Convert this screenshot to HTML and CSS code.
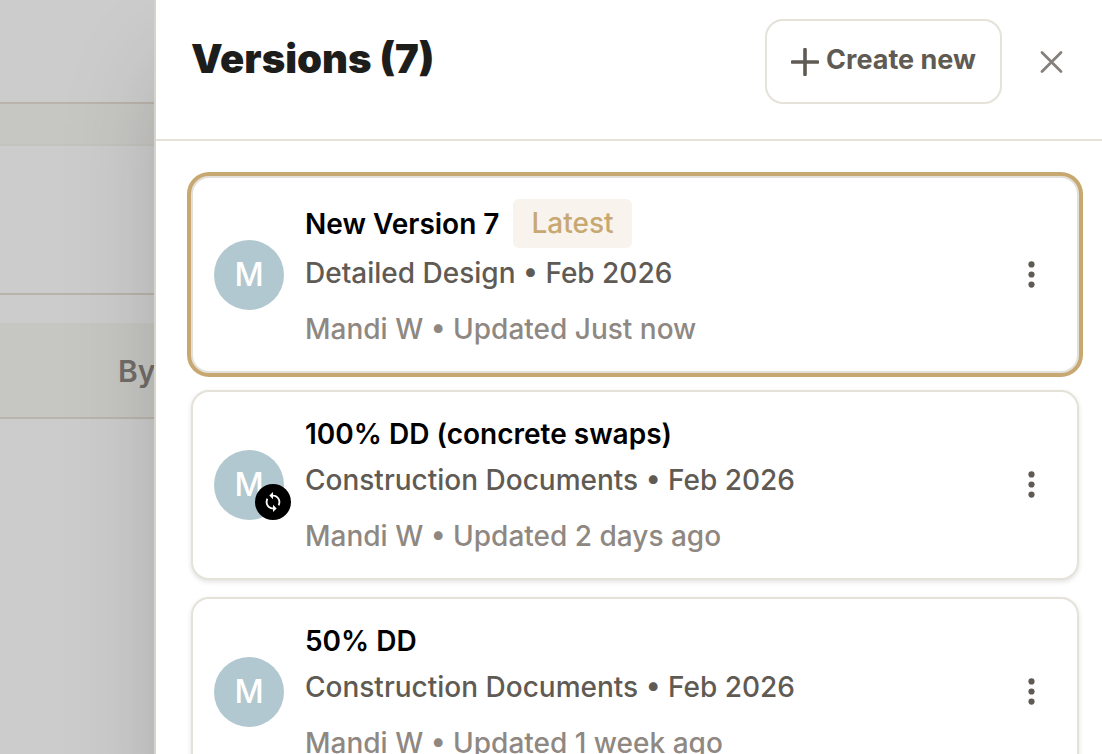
FILE: index.html
```html
<!DOCTYPE html>
<html lang="en">
<head>
    <meta charset="UTF-8">
    <meta name="viewport" content="width=device-width, initial-scale=1.0">
    <title>Versions</title>
    <link rel="stylesheet" href="styles.css">
</head>
<body>
    <div class="layout">
        <div class="page-behind">
            <div class="strip strip-top"></div>
            <div class="strip strip-tabs"></div>
            <div class="strip strip-toolbar"></div>
            <div class="strip strip-gap"></div>
            <div class="strip strip-head">By</div>
        </div>

        <main class="drawer">
            <header class="drawer-header">
                <h1>Versions (7)</h1>
                <button class="create-button" type="button">
                    <svg width="28" height="28" viewBox="0 0 28 28" aria-hidden="true">
                        <path d="M14 1.5V26.5M1.5 14H26.5" stroke="currentColor" stroke-width="3.6" stroke-linecap="round"/>
                    </svg>
                    <span>Create new</span>
                </button>
                <button class="close-button" type="button" aria-label="Close">
                    <svg width="32" height="32" viewBox="0 0 32 32" aria-hidden="true">
                        <path d="M7 6.5L26 25.5M26 6.5L7 25.5" stroke="currentColor" stroke-width="2.8" stroke-linecap="round"/>
                    </svg>
                </button>
            </header>

            <div class="version-list">
                <article class="card selected">
                    <div class="avatar">M</div>
                    <div class="details">
                        <div class="title-row">
                            <h2>New Version 7</h2>
                            <span class="badge">Latest</span>
                        </div>
                        <p class="phase">Detailed Design • Feb 2026</p>
                        <p class="updated">Mandi W • Updated Just now</p>
                    </div>
                    <button class="menu-button" type="button" aria-label="More options">
                        <svg width="8" height="28" viewBox="0 0 8 28" fill="currentColor" aria-hidden="true">
                            <circle cx="4.5" cy="3.4" r="3.1"/><circle cx="4.5" cy="13.5" r="3.1"/><circle cx="4.5" cy="23.6" r="3.1"/>
                        </svg>
                    </button>
                </article>

                <article class="card">
                    <div class="avatar">M
                        <span class="sync">
                            <svg width="22" height="22" viewBox="0 0 24 24" fill="currentColor" aria-hidden="true">
                                <path d="M12 4V1L8 5l4 4V6c3.31 0 6 2.69 6 6 0 1.01-.25 1.97-.7 2.8l1.46 1.46C19.54 15.03 20 13.57 20 12c0-4.42-3.58-8-8-8zm0 14c-3.31 0-6-2.69-6-6 0-1.01.25-1.97.7-2.8L5.24 7.74C4.46 8.97 4 10.43 4 12c0 4.42 3.58 8 8 8v3l4-4-4-4v3z"/>
                            </svg>
                        </span>
                    </div>
                    <div class="details">
                        <div class="title-row">
                            <h2>100% DD (concrete swaps)</h2>
                        </div>
                        <p class="phase">Construction Documents • Feb 2026</p>
                        <p class="updated">Mandi W • Updated 2 days ago</p>
                    </div>
                    <button class="menu-button" type="button" aria-label="More options">
                        <svg width="8" height="28" viewBox="0 0 8 28" fill="currentColor" aria-hidden="true">
                            <circle cx="4.5" cy="3.4" r="3.1"/><circle cx="4.5" cy="13.5" r="3.1"/><circle cx="4.5" cy="23.6" r="3.1"/>
                        </svg>
                    </button>
                </article>

                <article class="card">
                    <div class="avatar">M</div>
                    <div class="details">
                        <div class="title-row">
                            <h2>50% DD</h2>
                        </div>
                        <p class="phase">Construction Documents • Feb 2026</p>
                        <p class="updated">Mandi W • Updated 1 week ago</p>
                    </div>
                    <button class="menu-button" type="button" aria-label="More options">
                        <svg width="8" height="28" viewBox="0 0 8 28" fill="currentColor" aria-hidden="true">
                            <circle cx="4.5" cy="3.4" r="3.1"/><circle cx="4.5" cy="13.5" r="3.1"/><circle cx="4.5" cy="23.6" r="3.1"/>
                        </svg>
                    </button>
                </article>
            </div>
        </main>
    </div>
</body>
</html>
```

FILE: styles.css
```css
* {
    box-sizing: border-box;
}
body {
    margin: 0;
    height: 100vh;
    overflow: hidden;
    font-family: Inter, "Liberation Sans", sans-serif;
    font-size: 28px;
    line-height: 42px;
    background-color: #ccc;
}
h1, h2, p {
    margin: 0;
}
button {
    font: inherit;
    background: none;
    border: 0;
    padding: 0;
    display: flex;
    align-items: center;
    justify-content: center;
}
svg {
    display: block;
    fill: none;
}
svg[fill="currentColor"] {
    fill: currentColor;
}
.layout {
    display: grid;
    grid-template-columns: 154px 1fr;
}

/* dimmed page under the drawer */
.page-behind {
    overflow: hidden;
}
.strip {
    border-bottom: 2px solid #bab3ab;
}
.strip-top {
    height: 104px;
}
.strip-tabs {
    height: 42px;
    background-color: #c6c6c3;
    border-bottom-color: #c3c3be;
}
.strip-toolbar {
    height: 149px;
}
.strip-gap {
    height: 28px;
    border-bottom: 0;
}
.strip-head {
    height: 96px;
    padding: 27px 0 0 118px;
    background-color: #c6c6c3;
    border-bottom-color: #bab5ab;
    color: #716d69;
    font-size: 30px;
    font-weight: 600;
    white-space: nowrap;
}

.drawer {
    position: relative;
    background-color: #fff;
    border-left: 2px solid #d5d3ca;
    box-shadow: 0 50px 100px -24px rgba(0, 0, 0, 0.25);
}
.drawer-header {
    display: flex;
    align-items: center;
    padding: 19px 35px 35px;
    border-bottom: 2px solid #e5e2d9;
}
h1 {
    flex: 1;
    padding-bottom: 5px;
    font-size: 40px;
    font-weight: 900;
    color: #1d1d1b;
}
.create-button {
    height: 85px;
    padding: 0 24px;
    gap: 7px;
    border: 2px solid #e5e2d9;
    border-radius: 18px;
    color: #5f5b54;
    font-size: 27px;
    font-weight: 700;
}
.create-button span {
    padding-bottom: 3px;
}
.close-button {
    margin-left: 33px;
    color: #85807b;
}

.version-list {
    display: flex;
    flex-direction: column;
    gap: 17px;
    padding: 35px 23px 35px 35px;
}
.card {
    display: flex;
    align-items: center;
    gap: 21px;
    padding: 21px;
    background-color: #fff;
    border: 2px solid #e5e2d9;
    border-radius: 18px;
    box-shadow: 0 2px 5px rgba(0, 0, 0, 0.12);
}
.card.selected {
    border-color: #e2e0d9;
    box-shadow: 0 0 0 4px #c8a871;
}
.avatar {
    position: relative;
    width: 70px;
    height: 70px;
    border-radius: 50%;
    background-color: #b1c8d0;
    color: #fff;
    font-size: 32px;
    font-weight: 500;
    line-height: 70px;
    text-align: center;
}
.sync {
    position: absolute;
    right: -7px;
    bottom: 0;
    width: 36px;
    height: 36px;
    display: flex;
    align-items: center;
    justify-content: center;
    border-radius: 50%;
    background-color: #000;
}
.details {
    flex: 1;
    font-weight: 500;
}
.title-row {
    display: flex;
    align-items: center;
    gap: 14px;
    margin-bottom: 4px;
}
h2 {
    font-size: 28px;
    font-weight: 600;
    color: #000;
}
.badge {
    padding: 0 18px;
    line-height: 49px;
    border-radius: 6px;
    background-color: #f8f3ed;
    color: #c8a871;
}
.phase {
    color: #5f5b54;
}
.updated {
    margin-top: 14px;
    color: #8f8882;
}
.menu-button {
    width: 50px;
    height: 50px;
    color: #5f5b54;
}
```
